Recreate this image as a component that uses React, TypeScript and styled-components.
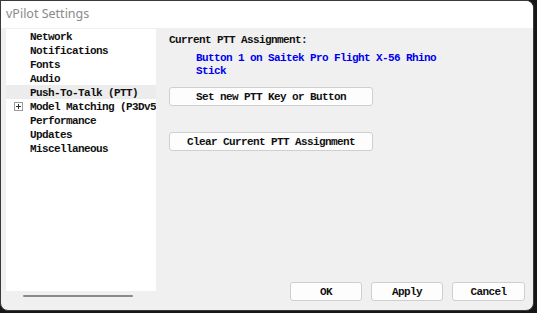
import styled, { createGlobalStyle } from "styled-components";

const GlobalStyle = createGlobalStyle`
  html, body {
    margin: 0;
    padding: 0;
    background: #161616;
    overflow: hidden;
  }
`;

const mono = `"Liberation Mono", "DejaVu Sans Mono", monospace`;

const Window = styled.div`
  width: 532px;
  height: 309px;
  display: flex;
  flex-direction: column;
  background: #f0f0f0;
  border: 1px solid #3a3a3a;
  border-radius: 0 8px 8px 8px;
  overflow: hidden;
`;

const TitleBar = styled.div`
  height: 27px;
  flex: 0 0 27px;
  background: #ffffff;
  display: flex;
  align-items: center;
  padding-left: 5px;
  padding-bottom: 2px;
  box-sizing: border-box;
  font-family: "Noto Sans", "Open Sans", sans-serif;
  font-size: 12.5px;
  color: #8a8a8a;
`;

const Body = styled.div`
  flex: 1;
  display: flex;
  padding: 1px 8px 9px 5px;
`;

const LeftColumn = styled.div`
  width: 150px;
  display: flex;
  flex-direction: column;
`;

const Tree = styled.div`
  height: 262px;
  background: #ffffff;
  display: flex;
  flex-direction: column;
`;

const TreeRow = styled.div<{ $selected?: boolean }>`
  height: 14px;
  display: flex;
  align-items: center;
  padding-top: 1px;
  box-sizing: border-box;
  background: ${(p) => (p.$selected ? "#ececec" : "transparent")};
  font-family: ${mono};
  font-size: 11px;
  letter-spacing: -0.6px;
  font-weight: bold;
  color: #111;
  white-space: nowrap;
  overflow: hidden;
`;

const Expander = styled.span`
  width: 24px;
  flex: 0 0 24px;
  display: flex;
  align-items: center;
  justify-content: flex-start;
  padding-left: 8px;
  box-sizing: border-box;
`;

const PlusBox = styled.span`
  width: 7px;
  height: 7px;
  border: 1px solid #9a9a9a;
  position: relative;
  background: #fff;

  &::before {
    content: "";
    position: absolute;
    left: 1px;
    top: 3px;
    width: 5px;
    height: 1px;
    background: #333;
  }
  &::after {
    content: "";
    position: absolute;
    left: 3px;
    top: 1px;
    width: 1px;
    height: 5px;
    background: #333;
  }
`;

const ScrollTrack = styled.div`
  flex: 1;
  display: flex;
  align-items: center;
  padding-left: 17px;
`;

const ScrollThumb = styled.div`
  width: 110px;
  height: 2px;
  background: #8a8a8a;
  border-radius: 1px;
`;

const RightColumn = styled.div`
  flex: 1;
  display: flex;
  flex-direction: column;
  padding-left: 13px;
`;

const Content = styled.div`
  flex: 1;
  display: flex;
  flex-direction: column;
  align-items: flex-start;
  font-family: ${mono};
  font-size: 11px;
  letter-spacing: -0.6px;
  font-weight: bold;
  color: #111;
`;

const Label = styled.div`
  margin-top: 4px;
  height: 14px;
  line-height: 14px;
`;

const Assignment = styled.div`
  margin-top: 5px;
  margin-left: 27px;
  width: 250px;
  color: #0000ee;
  line-height: 13px;
`;

const Button = styled.button<{ $width?: number }>`
  width: ${(p) => p.$width ?? 204}px;
  height: 19px;
  padding: 1px 0 0;
  background: #fdfdfd;
  border: 1px solid #cfcfcf;
  border-radius: 3px;
  font-family: ${mono};
  font-size: 11px;
  letter-spacing: -0.6px;
  font-weight: bold;
  color: #111;
  text-align: center;
`;

const PrimaryAction = styled(Button)`
  margin-top: 9px;
`;

const SecondaryAction = styled(Button)`
  margin-top: 26px;
`;

const Footer = styled.div`
  display: flex;
  justify-content: flex-end;
  gap: 9px;
  height: 19px;
`;

const items = [
  "Network",
  "Notifications",
  "Fonts",
  "Audio",
  "Push-To-Talk (PTT)",
  "Model Matching (P3Dv5)",
  "Performance",
  "Updates",
  "Miscellaneous",
];

const App = () => {
  return (
    <>
      <GlobalStyle />
      <Window>
        <TitleBar>vPilot Settings</TitleBar>
        <Body>
          <LeftColumn>
            <Tree>
              {items.map((item) => (
                <TreeRow key={item} $selected={item === "Push-To-Talk (PTT)"}>
                  <Expander>
                    {item.startsWith("Model") && <PlusBox />}
                  </Expander>
                  {item}
                </TreeRow>
              ))}
            </Tree>
            <ScrollTrack>
              <ScrollThumb />
            </ScrollTrack>
          </LeftColumn>
          <RightColumn>
            <Content>
              <Label>Current PTT Assignment:</Label>
              <Assignment>Button 1 on Saitek Pro Flight X-56 Rhino Stick</Assignment>
              <PrimaryAction>Set new PTT Key or Button</PrimaryAction>
              <SecondaryAction>Clear Current PTT Assignment</SecondaryAction>
            </Content>
            <Footer>
              <Button $width={72}>OK</Button>
              <Button $width={72}>Apply</Button>
              <Button $width={73}>Cancel</Button>
            </Footer>
          </RightColumn>
        </Body>
      </Window>
    </>
  );
};

export default App;
